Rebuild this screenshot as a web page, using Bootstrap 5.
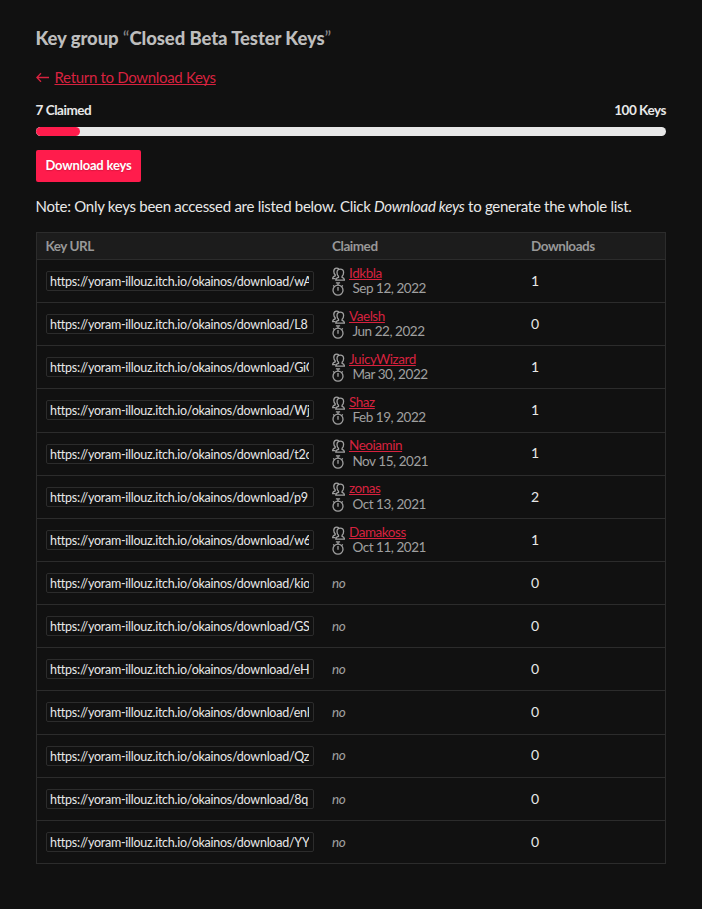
<!DOCTYPE html>
<html lang="en">
<head>
<meta charset="utf-8">
<meta name="viewport" content="width=device-width, initial-scale=1">
<title>Closed Beta Tester Keys</title>
<link href="https://cdn.jsdelivr.net/npm/bootstrap@5.3.0/dist/css/bootstrap.min.css" rel="stylesheet">
<style>
body{background:#111;color:#e8e8e8;font-family:Lato,"Liberation Sans",sans-serif;font-size:15px;line-height:20px}
.page{padding:26px 36px 0}
h1{font-size:18.5px;line-height:24px;font-weight:900;color:#bdbdbd;margin:0 0 17px -.5px;letter-spacing:-.1px}
h1 span{font-weight:400;color:#888}
.back{font-size:15px;line-height:20px;color:#d7223f;margin-bottom:14px;letter-spacing:-.32px}
a,a:hover{color:#d7223f;text-underline-offset:1px;text-decoration-thickness:1px;text-decoration-skip-ink:none}
.back svg{width:13px;height:10px;margin-right:5.5px}
.totals{font-size:13.5px;line-height:18px;font-weight:700;letter-spacing:-.45px;margin:0 0 8px -.5px}
.progress{height:9px;border-radius:5px;background:#e8e8e8;margin-bottom:14px}
.progress-bar{background:#ff1c4c;border-radius:5px}
.btn-keys,.btn-keys:hover{background:#ff1c4c;color:#fff;font-size:13px;font-weight:700;line-height:18px;padding:6px 9px 8px;border:0;border-radius:2px;width:105px;height:32px;white-space:nowrap;text-shadow:0 1px 1px #b3143580;letter-spacing:-.2px}
.note{font-size:15px;line-height:20px;margin:14px 0 16px -.5px;letter-spacing:-.28px}
.key-grid{border:1px solid #2c2c2c;width:630px}
.line{display:grid;grid-template-columns:295px 199px 1fr;align-items:center;height:43.143px;border-top:1px solid #2c2c2c;font-size:13.5px;line-height:15.4px;color:#a0a0a0;letter-spacing:-.45px}
.line:last-child{height:42.8px}
.line.heading{height:26px;border-top:0;padding-top:1px;background:#1c1c1c;font-weight:700;color:#989898}
.line>*{padding-left:8.5px}
.line>:nth-child(2),.line>:nth-child(3){padding-left:0}
.line>em{padding-top:1px}
.url{border:1px solid #2c2c2c;border-radius:2px;width:268px;height:20px;padding:0 4px 0 4px;color:#e8e8e8;font-size:12.5px;line-height:19px;margin-left:9px;letter-spacing:-.25px}
.line>.url{padding-left:3px}
.url span{display:block;overflow:hidden;white-space:nowrap}
.count{color:#e8e8e8;font-size:14px;margin-top:-1px}
.who svg{width:13px;height:14px;flex:none;margin-top:1px}
.who span{margin-left:-.6px}
.who div{height:15.4px}
</style>
</head>
<body>
<svg class="d-none" aria-hidden="true">
<symbol id="people" viewBox="0 0 13 14" fill="none" stroke="#a0a0a0" stroke-width="1.3">
<path d="M3.6 11.6H.7Q.7 9.5 3.2 8.8V7.7Q1.8 6.6 1.8 4.3Q1.8 1.1 4.7 1.1Q6.1 1.1 6.9 1.9"/>
<path fill="#111" d="M3.8 13.1H12.4Q12.4 11.1 10.1 10.4V9.2Q11.6 8 11.6 5.5Q11.6 2.2 8.3 2.2Q5 2.2 5 5.5Q5 8 6.5 9.2V10.4Q3.8 11.1 3.8 13.1Z"/>
</symbol>
<symbol id="watch" viewBox="0 0 13 14" fill="none" stroke="#a0a0a0" stroke-width="1.3">
<circle cx="6" cy="8.2" r="5"/><path d="M3.9.8H8.1M6 .8V3.2M6 5V8.7M1.2 3.4L2.6 4.8M10.8 3.4L9.4 4.8"/>
</symbol>
</svg>
<main class="page">
<h1>Key group <span>“</span>Closed Beta Tester Keys<span>”</span></h1>
<div class="back d-flex align-items-center"><svg viewBox="0 0 13 10" fill="none" stroke="#d7223f" stroke-width="1.3"><path d="M13 5.5H1M5 1.2L.8 5.5L5 9.8"/></svg><a href="#">Return to Download Keys</a></div>
<div class="totals d-flex justify-content-between"><span>7 Claimed</span><span>100 Keys</span></div>
<div class="progress"><div class="progress-bar" style="width:7%"></div></div>
<button class="btn btn-keys d-block" type="button">Download keys</button>
<p class="note">Note: Only keys been accessed are listed below. Click <em>Download keys</em> to generate the whole list.</p>
<div class="key-grid">
<div class="line heading"><div>Key URL</div><div>Claimed</div><div>Downloads</div></div>
<div class="line"><div class="url"><span>https://yoram-illouz.itch.io/okainos/download/wA</span></div><div class="who"><div class="d-flex gap-1"><svg><use href="#people"/></svg><a href="#">Idkbla</a></div><div class="d-flex gap-2"><svg><use href="#watch"/></svg><span>Sep 12, 2022</span></div></div><div class="count">1</div></div>
<div class="line"><div class="url"><span>https://yoram-illouz.itch.io/okainos/download/L8</span></div><div class="who"><div class="d-flex gap-1"><svg><use href="#people"/></svg><a href="#">Vaelsh</a></div><div class="d-flex gap-2"><svg><use href="#watch"/></svg><span>Jun 22, 2022</span></div></div><div class="count">0</div></div>
<div class="line"><div class="url"><span>https://yoram-illouz.itch.io/okainos/download/GiG</span></div><div class="who"><div class="d-flex gap-1"><svg><use href="#people"/></svg><a href="#">JuicyWizard</a></div><div class="d-flex gap-2"><svg><use href="#watch"/></svg><span>Mar 30, 2022</span></div></div><div class="count">1</div></div>
<div class="line"><div class="url"><span>https://yoram-illouz.itch.io/okainos/download/Wj</span></div><div class="who"><div class="d-flex gap-1"><svg><use href="#people"/></svg><a href="#">Shaz</a></div><div class="d-flex gap-2"><svg><use href="#watch"/></svg><span>Feb 19, 2022</span></div></div><div class="count">1</div></div>
<div class="line"><div class="url"><span>https://yoram-illouz.itch.io/okainos/download/t2o</span></div><div class="who"><div class="d-flex gap-1"><svg><use href="#people"/></svg><a href="#">Neoiamin</a></div><div class="d-flex gap-2"><svg><use href="#watch"/></svg><span>Nov 15, 2021</span></div></div><div class="count">1</div></div>
<div class="line"><div class="url"><span>https://yoram-illouz.itch.io/okainos/download/p9</span></div><div class="who"><div class="d-flex gap-1"><svg><use href="#people"/></svg><a href="#">zonas</a></div><div class="d-flex gap-2"><svg><use href="#watch"/></svg><span>Oct 13, 2021</span></div></div><div class="count">2</div></div>
<div class="line"><div class="url"><span>https://yoram-illouz.itch.io/okainos/download/w6</span></div><div class="who"><div class="d-flex gap-1"><svg><use href="#people"/></svg><a href="#">Damakoss</a></div><div class="d-flex gap-2"><svg><use href="#watch"/></svg><span>Oct 11, 2021</span></div></div><div class="count">1</div></div>
<div class="line"><div class="url"><span>https://yoram-illouz.itch.io/okainos/download/kio</span></div><em>no</em><div class="count">0</div></div>
<div class="line"><div class="url"><span>https://yoram-illouz.itch.io/okainos/download/GS</span></div><em>no</em><div class="count">0</div></div>
<div class="line"><div class="url"><span>https://yoram-illouz.itch.io/okainos/download/eH</span></div><em>no</em><div class="count">0</div></div>
<div class="line"><div class="url"><span>https://yoram-illouz.itch.io/okainos/download/enH</span></div><em>no</em><div class="count">0</div></div>
<div class="line"><div class="url"><span>https://yoram-illouz.itch.io/okainos/download/Qz</span></div><em>no</em><div class="count">0</div></div>
<div class="line"><div class="url"><span>https://yoram-illouz.itch.io/okainos/download/8q</span></div><em>no</em><div class="count">0</div></div>
<div class="line"><div class="url"><span>https://yoram-illouz.itch.io/okainos/download/YY</span></div><em>no</em><div class="count">0</div></div>
</div>
</main>
<script src="https://cdn.jsdelivr.net/npm/bootstrap@5.3.0/dist/js/bootstrap.bundle.min.js"></script>
</body>
</html>
